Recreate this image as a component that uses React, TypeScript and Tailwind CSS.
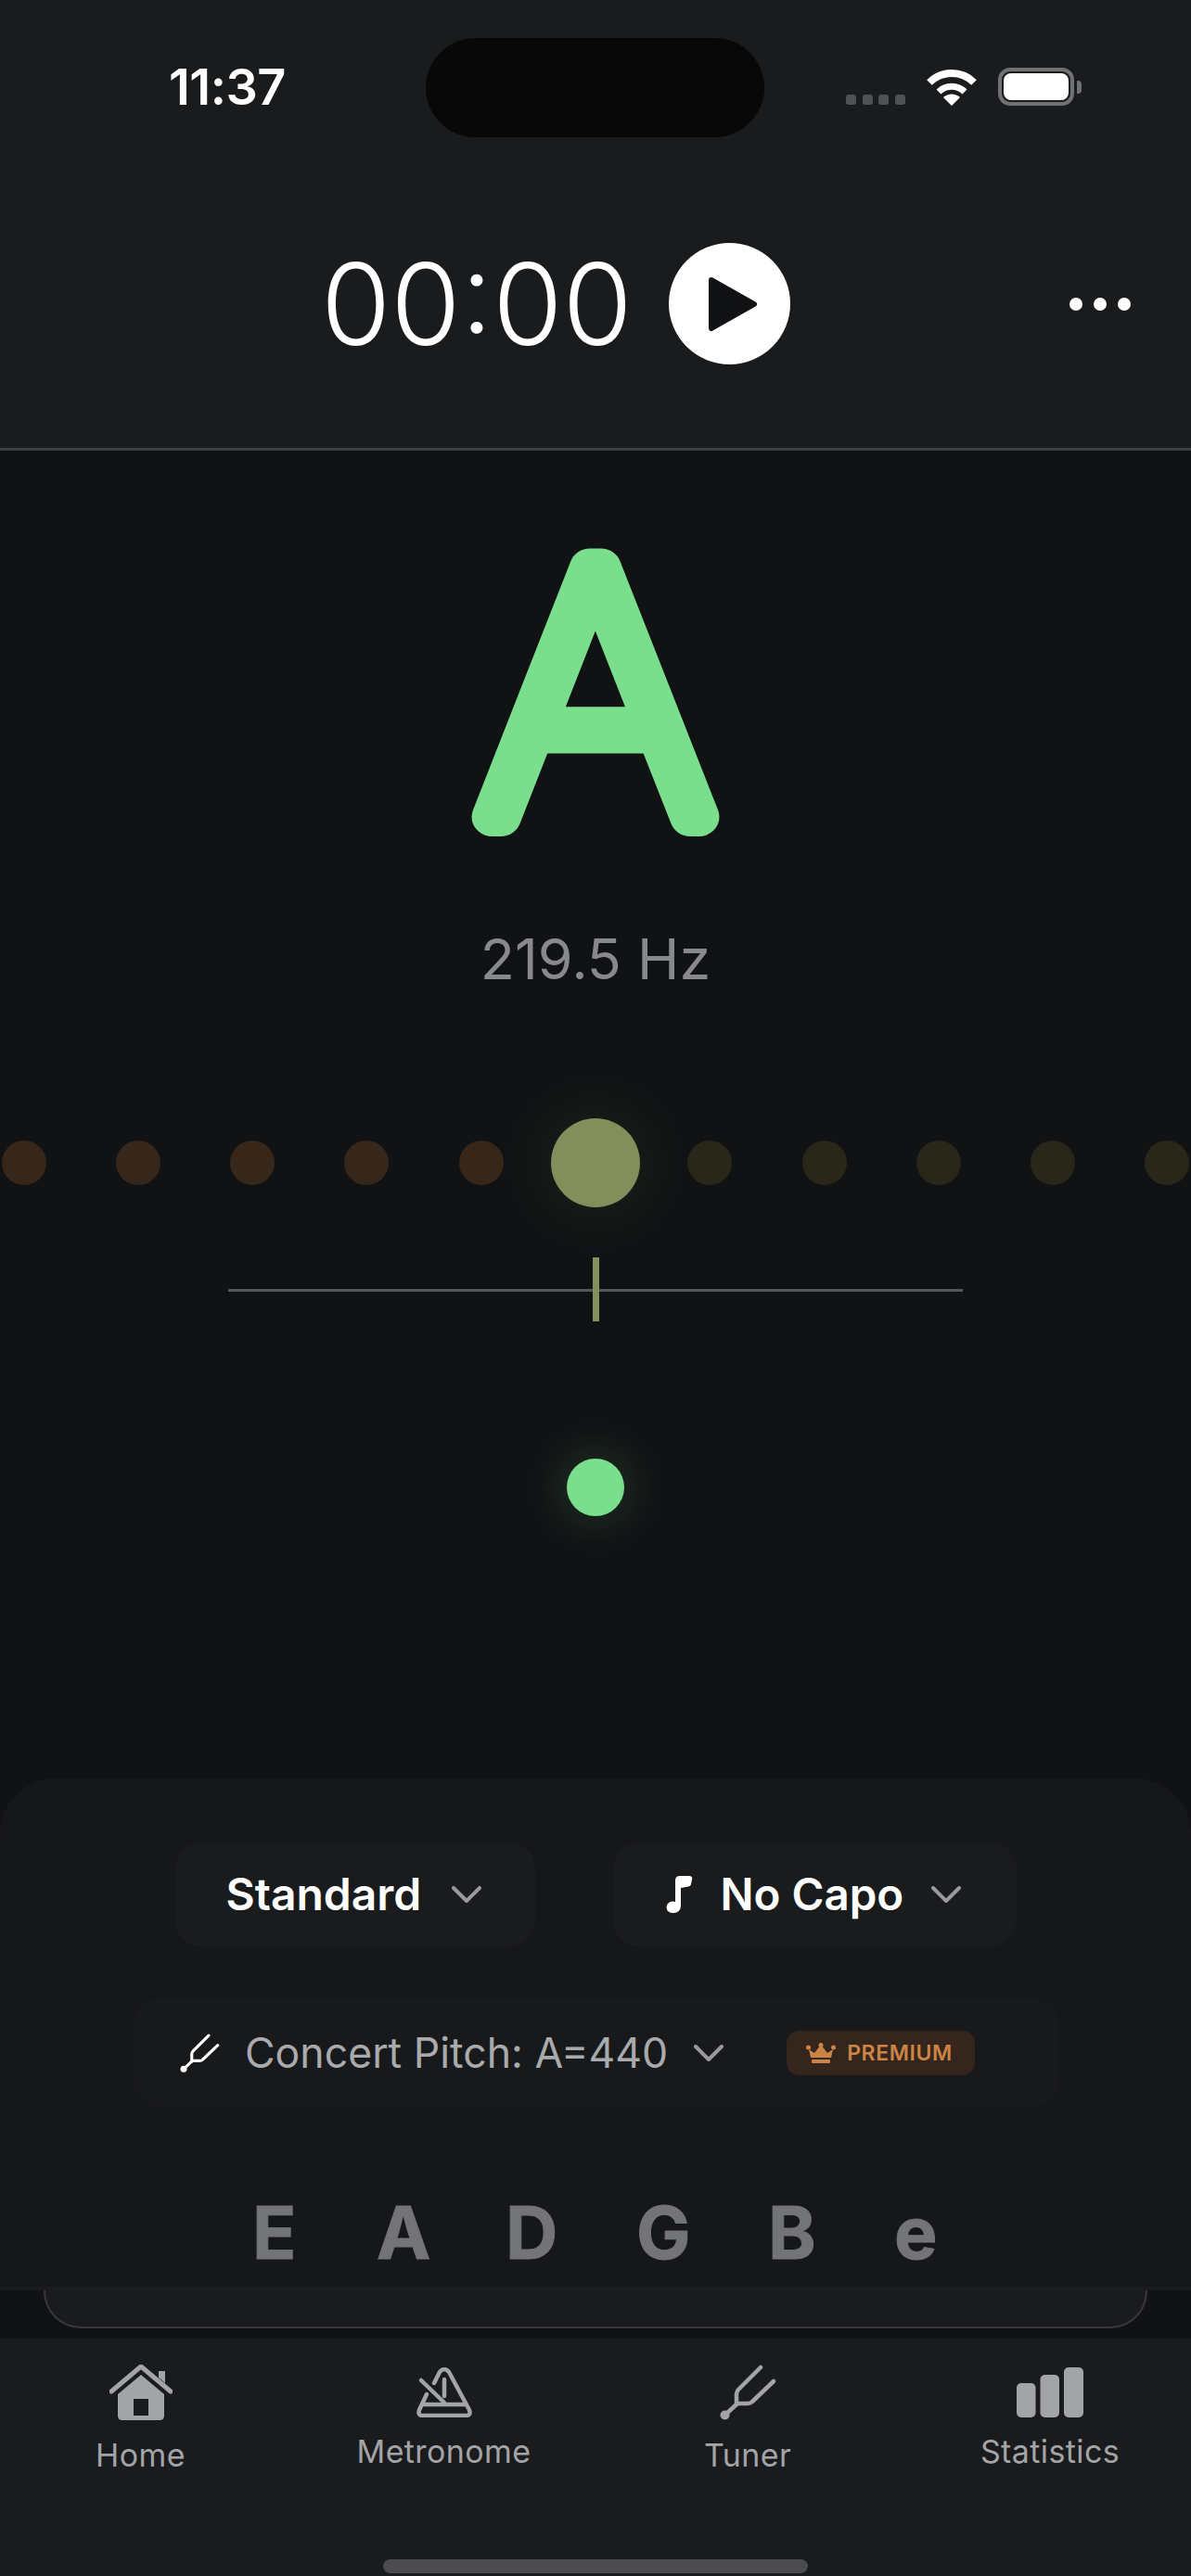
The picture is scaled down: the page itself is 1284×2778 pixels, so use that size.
import React from "react";

const leftDots = ["#36271a", "#36271a", "#36271a", "#36271a", "#36271a"];
const rightDots = ["#292719", "#292719", "#292719", "#292719", "#292719"];

function Chevron({ className }: { className: string }) {
    return (
        <svg className={className} viewBox="0 0 32 18" fill="none" stroke="currentColor" strokeWidth="4" strokeLinecap="round" strokeLinejoin="round">
            <path d="M2 2 16 16 30 2" />
        </svg>
    );
}

function Fork({ className }: { className: string }) {
    return (
        <svg className={className} viewBox="0 0 61 60" fill="none" stroke="currentColor" strokeWidth="4.5" strokeLinecap="round" strokeLinejoin="round">
            <path d="M44 3 20 27Q18 29 18 32V43" />
            <path d="M58 18 35 40Q33 42 30 42H19L6 54" />
            <circle cx="5.5" cy="54.5" r="5" fill="currentColor" stroke="none" />
        </svg>
    );
}

function HomeIcon() {
    return (
        <svg className="w-[68px] h-[60px]" viewBox="0 0 68 60" fill="none">
            <path d="M2 29 34 2 66 29" stroke="currentColor" strokeWidth="5" strokeLinecap="round" strokeLinejoin="round" />
            <path d="M53 7H60V20L53 14Z" fill="currentColor" />
            <path fillRule="evenodd" fill="currentColor" d="M34 11 59 32V55Q59 60 54 60H14Q9 60 9 55V32ZM26 37V55H42V37Z" />
        </svg>
    );
}

function MetronomeIcon() {
    return (
        <svg className="w-[60px] h-[54px]" viewBox="0 0 60 54" fill="none" stroke="currentColor" strokeWidth="4.5" strokeLinecap="round" strokeLinejoin="round">
            <path d="M19 17 25 5Q30 -1 35 5L57 46Q59 52 53 52H7Q1 52 3 46L11 29" />
            <path d="M5 14 30 38" />
            <path d="M30 13V31" />
            <path d="M8 40H52" />
        </svg>
    );
}

function StatsIcon() {
    return (
        <svg className="w-[72px] h-[54px]" viewBox="0 0 72 54" fill="currentColor">
            <rect x="0" y="17" width="20.5" height="37" rx="5" />
            <rect x="25.5" y="8" width="20.5" height="46" rx="5" />
            <rect x="51" y="0" width="21" height="54" rx="5" />
        </svg>
    );
}

function NavItem({ label, icon, raised }: { label: string; icon: React.ReactNode; raised?: boolean }) {
    return (
        <div className="flex flex-col items-center">
            <div className="h-[60px] flex items-center">{icon}</div>
            <span className={`text-[34px] leading-[40px] tracking-[0.4px] ${raised ? "mt-[14px]" : "mt-[18px]"}`}>{label}</span>
        </div>
    );
}

export default function App() {
    return (
        <div className="w-[1284px] h-[2778px] flex flex-col bg-[#111214] overflow-hidden font-['Inter',sans-serif] text-white">
            <header className="h-[486px] shrink-0 bg-[#1a1b1d] border-b-[3px] border-[#3e3f41]">
                <div className="flex items-start pt-[41px] pl-[182px]">
                    <span className="w-[277px] pt-[23px] text-[54px] leading-[60px] font-semibold tracking-[-0.5px]">11:37</span>
                    <div className="w-[365px] h-[107px] rounded-[54px] bg-[#080808]" />
                    <div className="flex items-end pl-[88px] pt-[32px] h-[73px]">
                        <div className="flex gap-[6.5px] mb-[1px]">
                            <div className="w-[11px] h-[11px] rounded-[3px] bg-[#505153]" />
                            <div className="w-[11px] h-[11px] rounded-[3px] bg-[#505153]" />
                            <div className="w-[11px] h-[11px] rounded-[3px] bg-[#505153]" />
                            <div className="w-[11px] h-[11px] rounded-[3px] bg-[#505153]" />
                        </div>
                        <svg className="w-[56px] h-[41px] ml-[22px]" viewBox="0 0 56 41" fill="none" stroke="white">
                            <path d="M4 16A34 34 0 0 1 52 16" strokeWidth="8" />
                            <path d="M14 26A20 20 0 0 1 42 26" strokeWidth="7" />
                            <path d="M28 41 19 32A13 13 0 0 1 37 32Z" fill="white" stroke="none" />
                        </svg>
                        <div className="flex items-center ml-[22px]">
                            <div className="w-[82px] h-[41px] rounded-[13px] border-[4px] border-[#707173] p-[2px]">
                                <div className="w-full h-full rounded-[8px] bg-white" />
                            </div>
                            <div className="w-[5px] h-[14px] ml-[3px] rounded-r-[4px] bg-[#707173]" />
                        </div>
                    </div>
                </div>
                <div className="flex items-center mt-[114px] pl-[346px]">
                    <span className="w-[375px] text-[122px] leading-[131px] font-light">00:00</span>
                    <div className="w-[131px] h-[131px] rounded-full bg-white flex items-center justify-center">
                        <svg className="w-[54px] h-[60px] ml-[6px]" viewBox="0 0 54 60" fill="#111214" stroke="#111214" strokeWidth="6" strokeLinejoin="round">
                            <path d="M4 4 50 30 4 56Z" />
                        </svg>
                    </div>
                    <div className="flex gap-[12px] ml-[301px]">
                        <div className="w-[14px] h-[14px] rounded-full bg-white" />
                        <div className="w-[14px] h-[14px] rounded-full bg-white" />
                        <div className="w-[14px] h-[14px] rounded-full bg-white" />
                    </div>
                </div>
            </header>

            <main className="flex-1 flex flex-col items-center overflow-hidden">
                <svg className="w-[500px] h-[450px] mt-[24px] shrink-0 overflow-visible" viewBox="0 0 500 450">
                    <text transform="translate(250 0) scale(1.05 1)" x="0" y="371" textAnchor="middle" fontFamily="Inter, sans-serif" fontSize="369" fontWeight="100" fill="#7adf8c" stroke="#7adf8c" strokeWidth="42" strokeLinejoin="round">A</text>
                </svg>
                <div className="mt-[38px] text-[61px] leading-[72px] text-[#88898c]">219.5 Hz</div>
                <div className="grid grid-cols-11 w-[1356px] shrink-0 mt-[136px] h-[96px] items-center justify-items-center">
                    {leftDots.map((color, index) => (
                        <div key={index} className="w-[48px] h-[48px] rounded-full" style={{ backgroundColor: color }} />
                    ))}
                    <div className="w-[96px] h-[96px] rounded-full bg-[#838f5a] shadow-[0_0_70px_16px_rgba(131,143,90,0.1)]" />
                    {rightDots.map((color, index) => (
                        <div key={index} className="w-[48px] h-[48px] rounded-full" style={{ backgroundColor: color }} />
                    ))}
                </div>
                <div className="relative w-[792px] h-[3px] mt-[88px] bg-[#55565a]">
                    <div className="absolute left-[392.5px] top-[-34px] w-[7px] h-[69px] bg-[#83905a]" />
                </div>
                <div className="w-[62px] h-[62px] mt-[180px] rounded-full bg-[#7adf8c] shadow-[0_0_50px_8px_rgba(122,223,140,0.16)]" />
            </main>

            <section className="h-[548px] shrink-0 rounded-t-[60px] bg-[#161719] flex flex-col items-center pt-[69px]">
                <div className="flex gap-[84px]">
                    <div className="w-[388px] h-[112px] rounded-[28px] bg-[#1a1b1d] flex items-center pl-[55px]">
                        <span className="text-[48px] leading-[58px] font-[560]">Standard</span>
                        <Chevron className="w-[32px] h-[18px] ml-[33px] text-[#9a9a9c]" />
                    </div>
                    <div className="w-[435px] h-[112px] rounded-[28px] bg-[#1a1b1d] flex items-center pl-[57px]">
                        <svg className="w-[29px] h-[40px]" viewBox="0 0 29 40" fill="white">
                            <path d="M10 32V5Q10 0 15 0H25Q29 0 28 4L27 9Q26.5 11 24 11.500L16 13V33Q15 40 8 40Q1 40 0.500 34Q1 28 7 27.500Q9 27.500 10 28Z" />
                        </svg>
                        <span className="text-[47.5px] leading-[58px] font-[560] ml-[30px]">No Capo</span>
                        <Chevron className="w-[32px] h-[18px] ml-[30px] text-[#9a9a9c]" />
                    </div>
                </div>
                <div className="w-[998px] h-[117px] mt-[56px] self-start ml-[144px] rounded-[28px] bg-[#18191b] flex items-center pl-[50px]">
                    <Fork className="w-[43px] h-[42px] text-white" />
                    <span className="text-[44.6px] leading-[54px] text-[#a9aaac] ml-[27px]">Concert Pitch: A=440</span>
                    <Chevron className="w-[32px] h-[18px] ml-[28px] text-[#9a9a9c]" />
                    <div className="w-[203px] h-[48px] ml-[68px] rounded-[14px] bg-[#35261d] flex items-center pl-[21px] text-[#cc8444]">
                        <svg className="w-[32px] h-[22px]" viewBox="0 0 32 22" fill="currentColor">
                            <path d="M3 7 9 11 16 2 23 11 29 7 27 16H5Z" />
                            <circle cx="2.500" cy="5" r="2.500" />
                            <circle cx="16" cy="2.500" r="2.500" />
                            <circle cx="29.500" cy="5" r="2.500" />
                            <rect x="6" y="18" width="20" height="4" rx="1" />
                        </svg>
                        <span className="text-[23px] leading-[28px] font-semibold tracking-[0.6px] ml-[12px]">PREMIUM</span>
                    </div>
                </div>
                <div className="w-[792px] mt-[88px] pl-[26px] grid grid-cols-[134px_139px_141px_142px_136px_60px] justify-items-start text-[78px] leading-[96px] font-bold text-[#737476] [-webkit-text-stroke:1px_#737476]">
                    <span>E</span>
                    <span>A</span>
                    <span>D</span>
                    <span>G</span>
                    <span>B</span>
                    <span>e</span>
                </div>
            </section>

            <div className="h-[56px] shrink-0 flex flex-col">
                <div className="h-[4px] bg-[#1a1b1d]" />
                <div className="w-[1190px] h-[41px] mx-auto rounded-b-[40px] border-x-2 border-b-2 border-[#3a3540] bg-[#1a1b1d]" />
            </div>

            <nav className="h-[256px] shrink-0 bg-[#1a1b1d] flex flex-col items-center text-[#a3a4a6]">
                <div className="w-full flex items-start pt-[28px] pl-[105px]">
                    <div className="w-[93px]"><NavItem label="Home" icon={<HomeIcon />} /></div>
                    <div className="ml-[188px] w-[185px]"><NavItem raised label="Metronome" icon={<MetronomeIcon />} /></div>
                    <div className="ml-[189px] w-[92px]"><NavItem label="Tuner" icon={<Fork className="w-[61px] h-[60px]" />} /></div>
                    <div className="ml-[205px] w-[150px]"><NavItem raised label="Statistics" icon={<StatsIcon />} /></div>
                </div>
                <div className="w-[458px] h-[15px] mt-[92px] rounded-full bg-[#4b4b4d]" />
            </nav>
        </div>
    );
}
